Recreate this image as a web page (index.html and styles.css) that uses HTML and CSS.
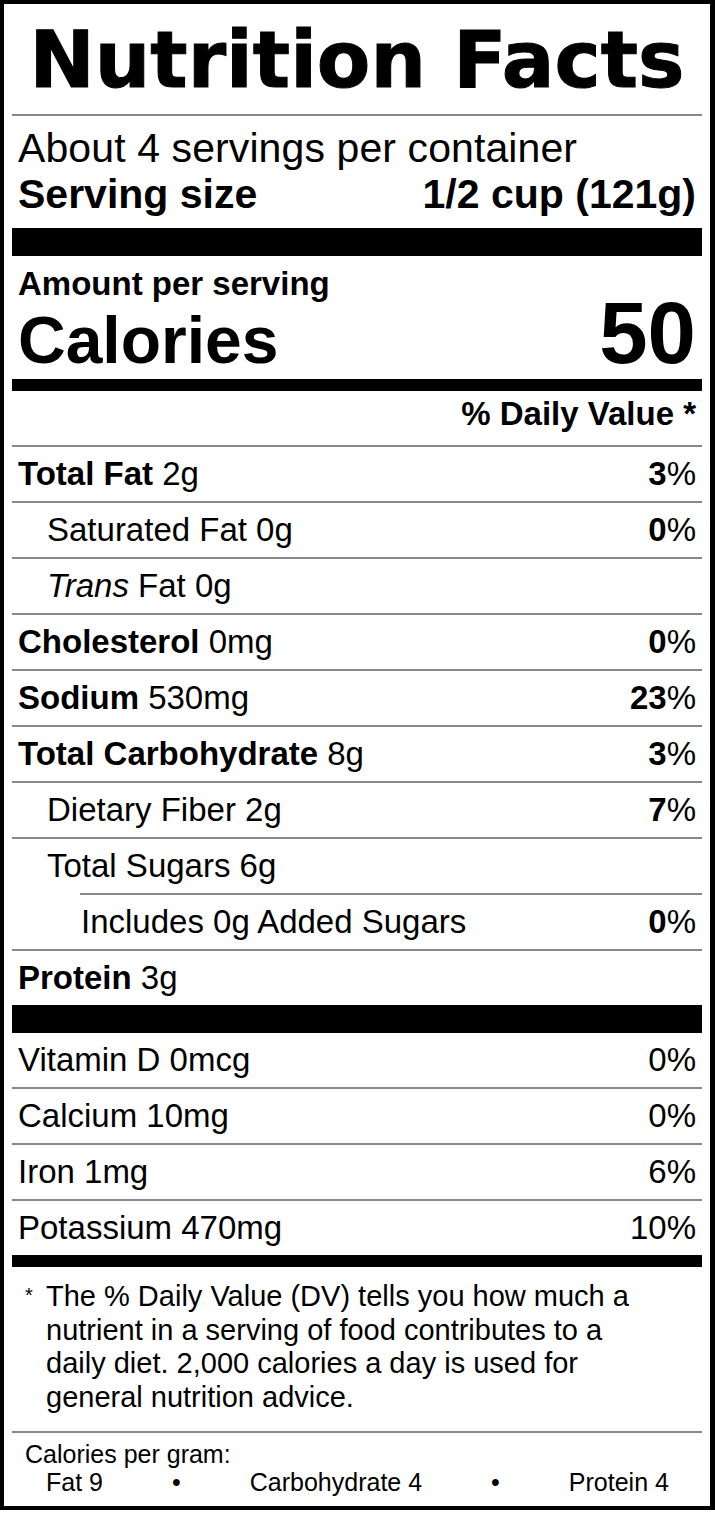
FILE: index.html
```html
<!DOCTYPE html>
<html lang="en">
<head>
    <meta charset="UTF-8">
    <meta name="viewport" content="width=device-width, initial-scale=1.0">
    <title>Nutrition Facts</title>
    <link rel="stylesheet" href="styles.css">
</head>
<body>
    <div class="label">
        <h1 class="title">Nutrition Facts</h1>

        <div class="servings">
            <div class="servings-count">About 4 servings per container</div>
            <div class="serving-size">
                <span>Serving size</span>
                <span>1/2 cup (121g)</span>
            </div>
        </div>

        <div class="bar bar-thick"></div>

        <div class="calories-block">
            <div class="amount">Amount per serving</div>
            <div class="calories">
                <span class="calories-label">Calories</span>
                <span class="calories-value">50</span>
            </div>
        </div>

        <div class="bar bar-medium"></div>

        <div class="dv-head">% Daily Value *</div>

        <div class="nutrients">
            <div class="row"><span><b>Total Fat</b> 2g</span><span><b>3</b>%</span></div>
            <div class="row sub"><span>Saturated Fat 0g</span><span><b>0</b>%</span></div>
            <div class="row sub"><span><i>Trans</i> Fat 0g</span></div>
            <div class="row"><span><b>Cholesterol</b> 0mg</span><span><b>0</b>%</span></div>
            <div class="row"><span><b>Sodium</b> 530mg</span><span><b>23</b>%</span></div>
            <div class="row"><span><b>Total Carbohydrate</b> 8g</span><span><b>3</b>%</span></div>
            <div class="row sub"><span>Dietary Fiber 2g</span><span><b>7</b>%</span></div>
            <div class="row sub"><span>Total Sugars 6g</span></div>
            <div class="row added"><span>Includes 0g Added Sugars</span><span><b>0</b>%</span></div>
            <div class="row"><span><b>Protein</b> 3g</span></div>
        </div>

        <div class="bar bar-thick"></div>

        <div class="vitamins">
            <div class="row"><span>Vitamin D 0mcg</span><span>0%</span></div>
            <div class="row"><span>Calcium 10mg</span><span>0%</span></div>
            <div class="row"><span>Iron 1mg</span><span>6%</span></div>
            <div class="row"><span>Potassium 470mg</span><span>10%</span></div>
        </div>

        <div class="bar bar-medium"></div>

        <div class="footnote">
            <span class="star">*</span>
            <p>The % Daily Value (DV) tells you how much a<br>nutrient in a serving of food contributes to a<br>daily diet. 2,000 calories a day is used for<br>general nutrition advice.</p>
        </div>

        <div class="per-gram">
            <div>Calories per gram:</div>
            <div class="per-gram-values">
                <span>Fat 9</span>
                <span class="dot">&bull;</span>
                <span>Carbohydrate 4</span>
                <span class="dot">&bull;</span>
                <span>Protein 4</span>
            </div>
        </div>
    </div>
</body>
</html>
```

FILE: styles.css
```css
body {
    margin: 0;
    background-color: #fff;
    color: #000;
    font-family: "Liberation Sans", Arial, sans-serif;
}
.label {
    width: 715px;
    box-sizing: border-box;
    border: 4px solid #000;
    border-right-width: 5px;
    padding: 0 8px;
}
.title {
    margin: 0;
    padding: 17px 0 15px;
    border-bottom: 2px solid #888;
    font-family: "DejaVu Sans", "Liberation Sans", sans-serif;
    font-size: 78px;
    font-weight: bold;
    line-height: 78px;
    text-align: center;
    -webkit-text-stroke: 1px #000;
}
.servings {
    padding: 9px 6px 11px;
    font-size: 41px;
    line-height: 46px;
}
.servings-count {
    letter-spacing: 0.1px;
}
.serving-size {
    display: flex;
    justify-content: space-between;
    font-weight: bold;
}
.bar {
    background-color: #000;
}
.bar-thick {
    height: 28px;
}
.bar-medium {
    height: 12px;
}
.calories-block {
    padding: 12px 6px 6px;
    font-weight: bold;
}
.amount {
    font-size: 33px;
    line-height: 32px;
}
.calories {
    display: flex;
    justify-content: space-between;
    align-items: baseline;
    line-height: 66px;
}
.calories-label {
    font-size: 66px;
}
.calories-value {
    font-size: 87px;
}
.dv-head {
    padding: 3px 6px 11px;
    font-size: 33px;
    font-weight: bold;
    line-height: 40px;
    text-align: right;
}
.row {
    display: flex;
    justify-content: space-between;
    padding: 0 6px;
    border-top: 2px solid #888;
    font-size: 33px;
    line-height: 54px;
}
.row.sub {
    padding-left: 35px;
}
.row.added {
    margin-left: 68px;
    padding-left: 1px;
}
.vitamins .row:first-child {
    border-top: none;
}
.footnote {
    display: flex;
    padding: 13px 6px 17px 13px;
    border-bottom: 2px solid #888;
    font-size: 29px;
    line-height: 33.5px;
}
.footnote .star {
    width: 21px;
    flex-shrink: 0;
    font-size: 20px;
    line-height: 30px;
}
.footnote p {
    margin: 0;
}
.per-gram {
    padding: 7px 6px 10px 13px;
    font-size: 25px;
    line-height: 28px;
}
.per-gram-values {
    display: flex;
    gap: 69px;
    padding-left: 21px;
}
```
